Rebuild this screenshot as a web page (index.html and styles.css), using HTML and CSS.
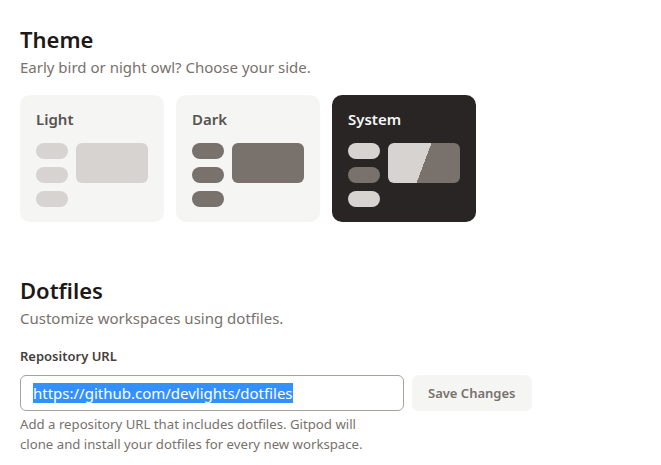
FILE: index.html
```html
<!DOCTYPE html>
<html>
<head>
<meta charset="utf-8">
<link rel="stylesheet" href="styles.css">
</head>
<body>
<section class="section">
  <h1 class="title">Theme</h1>
  <p class="subtitle">Early bird or night owl? Choose your side.</p>
  <div class="themes">
    <div class="card light">
      <div class="card-label">Light</div>
      <div class="preview">
        <div class="pills"><span class="pill"></span><span class="pill"></span><span class="pill"></span></div>
        <div class="screen"></div>
      </div>
    </div>
    <div class="card dark">
      <div class="card-label">Dark</div>
      <div class="preview">
        <div class="pills"><span class="pill"></span><span class="pill"></span><span class="pill"></span></div>
        <div class="screen"></div>
      </div>
    </div>
    <div class="card system">
      <div class="card-label">System</div>
      <div class="preview">
        <div class="pills"><span class="pill"></span><span class="pill mid"></span><span class="pill"></span></div>
        <div class="screen"></div>
      </div>
    </div>
  </div>
</section>
<section class="section dotfiles">
  <h1 class="title">Dotfiles</h1>
  <p class="subtitle">Customize workspaces using dotfiles.</p>
  <label class="field-label">Repository URL</label>
  <div class="row">
    <div class="input"><span class="sel">https://github.com/devlights/dotfiles</span></div>
    <button class="btn">Save Changes</button>
  </div>
  <p class="help">Add a repository URL that includes dotfiles. Gitpod will<br>clone and install your dotfiles for every new workspace.</p>
</section>
</body>
</html>
```
FILE: styles.css
```css
* { box-sizing: border-box; }
body {
  margin: 0;
  padding: 24px 20px 0;
  background: #fff;
  font-family: "Noto Sans", "Open Sans", sans-serif;
  color: #292524;
}
.section { margin: 0; }
.title {
  margin: 0;
  font-size: 22px;
  line-height: 30px;
  font-weight: 600;
  color: #1c1917;
}
.subtitle {
  margin: 3px 0 0;
  font-size: 15px;
  line-height: 20px;
  color: #78716c;
}
.themes {
  display: flex;
  gap: 12px;
  margin-top: 18px;
}
.card {
  width: 144px;
  height: 127px;
  border-radius: 10px;
  padding: 14px 16px;
  background: #f5f5f4;
}
.card-label {
  font-size: 15px;
  line-height: 20px;
  font-weight: 600;
  color: #57534e;
}
.system { background: #292524; }
.system .card-label { color: #f5f5f4; }
.preview {
  display: flex;
  gap: 8px;
  margin-top: 14px;
}
.pills { display: flex; flex-direction: column; gap: 8px; }
.pill {
  display: block;
  width: 32px;
  height: 16px;
  border-radius: 8px;
  background: #d6d3d1;
}
.screen {
  width: 72px;
  height: 40px;
  border-radius: 6px;
  background: #d6d3d1;
}
.dark .pill, .dark .screen { background: #78716c; }
.system .pill.mid { background: #78716c; }
.system .screen {
  background: linear-gradient(110.6deg, #d6d3d1 0 50%, #78716c 50% 100%);
}
.dotfiles { margin-top: 53px; }
.field-label {
  display: block;
  margin-top: 19px;
  font-size: 13px;
  line-height: 18px;
  font-weight: 600;
  color: #44403c;
}
.row {
  display: flex;
  gap: 8px;
  margin-top: 10px;
}
.input {
  width: 384px;
  height: 36px;
  border: 1px solid #a8a29e;
  border-radius: 6px;
  padding: 0 12px;
  display: flex;
  align-items: center;
  font-size: 15px;
  color: #fff;
}
.sel { background: #3390ff; line-height: 20px; }
.btn {
  height: 36px;
  padding: 0 16px;
  border: none;
  border-radius: 6px;
  background: #f5f5f4;
  font-family: inherit;
  font-size: 13px;
  font-weight: 600;
  color: #78716c;
}
.help {
  margin: 3px 0 0;
  font-size: 13.2px;
  line-height: 20px;
  color: #78716c;
}
```
